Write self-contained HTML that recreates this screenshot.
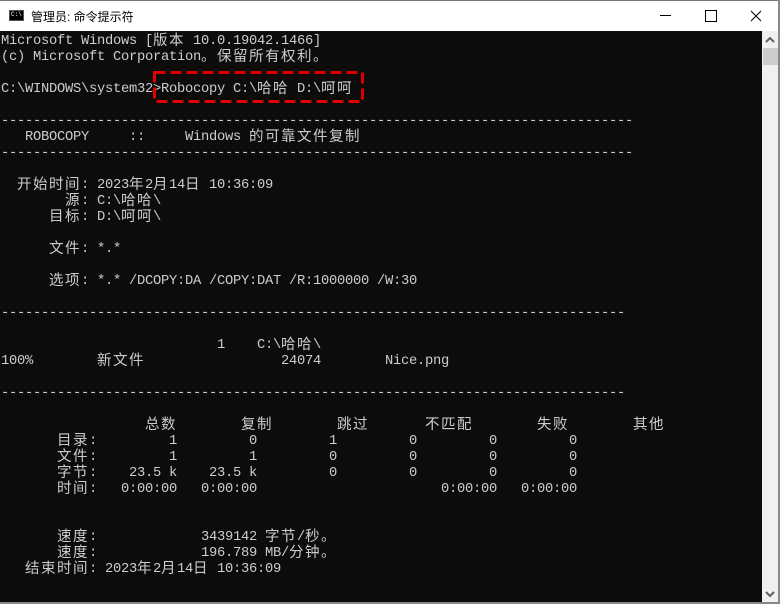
<!DOCTYPE html>
<html><head><meta charset="utf-8"><style>
*{margin:0;padding:0}
body{width:780px;height:604px;overflow:hidden;background:#fff;position:relative;font-family:"Liberation Sans","Noto Sans CJK SC",sans-serif}
#tb{position:absolute;left:0;top:0;width:780px;height:31px;background:#fff;border-top:1px solid #777;box-sizing:border-box}
#con{position:absolute;left:0;top:31px;width:762px;height:571px;background:#0c0c0c}
#sb{position:absolute;left:762px;top:31px;width:16px;height:571px;background:#f0f0f0}
#rb{position:absolute;left:778px;top:0;width:2px;height:604px;background:#888}
#bb{position:absolute;left:0;top:602px;width:780px;height:2px;background:#888}
pre{position:absolute;left:1px;top:34px;font-family:"Liberation Mono",monospace;font-size:13.8px;letter-spacing:-0.28px;line-height:16px;color:#cccccc;white-space:pre}
b{font-weight:normal;font-family:"Noto Sans CJK SC",sans-serif;font-size:14.5px;letter-spacing:1.5px;display:inline-block;line-height:16px;vertical-align:top;position:relative;top:-2px}
</style></head><body>
<div id="tb">
<div style="position:absolute;left:9px;top:9px;width:15px;height:11px;background:#000;border:1px solid #555;box-sizing:border-box;color:#fff;font:6px 'Liberation Mono',monospace;line-height:8px;padding-left:1px">C:\</div>
<div style="position:absolute;left:31px;top:7px;font-size:12px;color:#000">管理员: 命令提示符</div>
<div style="position:absolute;left:660px;top:14px;width:11px;height:1px;background:#000"></div>
<div style="position:absolute;left:705px;top:9px;width:10px;height:10px;border:1px solid #000"></div>
<svg style="position:absolute;left:750px;top:9px" width="12" height="12"><path d="M1 1L11 11M11 1L1 11" stroke="#000" stroke-width="1"/></svg>
</div>
<div id="con"></div>
<div id="sb">
<svg style="position:absolute;left:3px;top:5px" width="10" height="8"><path d="M1 6L5 2L9 6" stroke="#606060" stroke-width="2" fill="none"/></svg>
<div style="position:absolute;left:1px;top:17px;width:15px;height:17px;background:#cdcdcd"></div>
<svg style="position:absolute;left:3px;top:559px" width="10" height="8"><path d="M1 2L5 6L9 2" stroke="#606060" stroke-width="2" fill="none"/></svg>
</div>
<div id="rb"></div><div id="bb"></div>
<pre>Microsoft Windows [<b>版本</b> 10.0.19042.1466]
(c) Microsoft Corporation<b>。保留所有权利。</b>

C:\WINDOWS\system32&gt;Robocopy C:\<b>哈哈</b> D:\<b>呵呵</b>

-------------------------------------------------------------------------------
   ROBOCOPY     ::     Windows <b>的可靠文件复制</b>
-------------------------------------------------------------------------------

  <b>开始时间</b>: 2023<b>年</b>2<b>月</b>14<b>日</b> 10:36:09
        <b>源</b>: C:\<b>哈哈</b>\
      <b>目标</b>: D:\<b>呵呵</b>\

      <b>文件</b>: *.*

      <b>选项</b>: *.* /DCOPY:DA /COPY:DAT /R:1000000 /W:30

------------------------------------------------------------------------------

                           1    C:\<b>哈哈</b>\
100%        <b>新文件</b>                 24074        Nice.png

------------------------------------------------------------------------------

                  <b>总数</b>        <b>复制</b>        <b>跳过</b>       <b>不匹配</b>        <b>失败</b>        <b>其他</b>
       <b>目录</b>:         1         0         1         0         0         0
       <b>文件</b>:         1         1         0         0         0         0
       <b>字节</b>:    23.5 k    23.5 k         0         0         0         0
       <b>时间</b>:   0:00:00   0:00:00                       0:00:00   0:00:00


       <b>速度</b>:             3439142 <b>字节</b>/<b>秒。</b>
       <b>速度</b>:             196.789 MB/<b>分钟。</b>
   <b>结束时间</b>: 2023<b>年</b>2<b>月</b>14<b>日</b> 10:36:09
</pre>
<svg style="position:absolute;left:153px;top:71px" width="211" height="32"><rect x="1.5" y="1.5" width="208" height="29" fill="none" stroke="#e00000" stroke-width="3" stroke-dasharray="11 5"/></svg>
</body></html>
